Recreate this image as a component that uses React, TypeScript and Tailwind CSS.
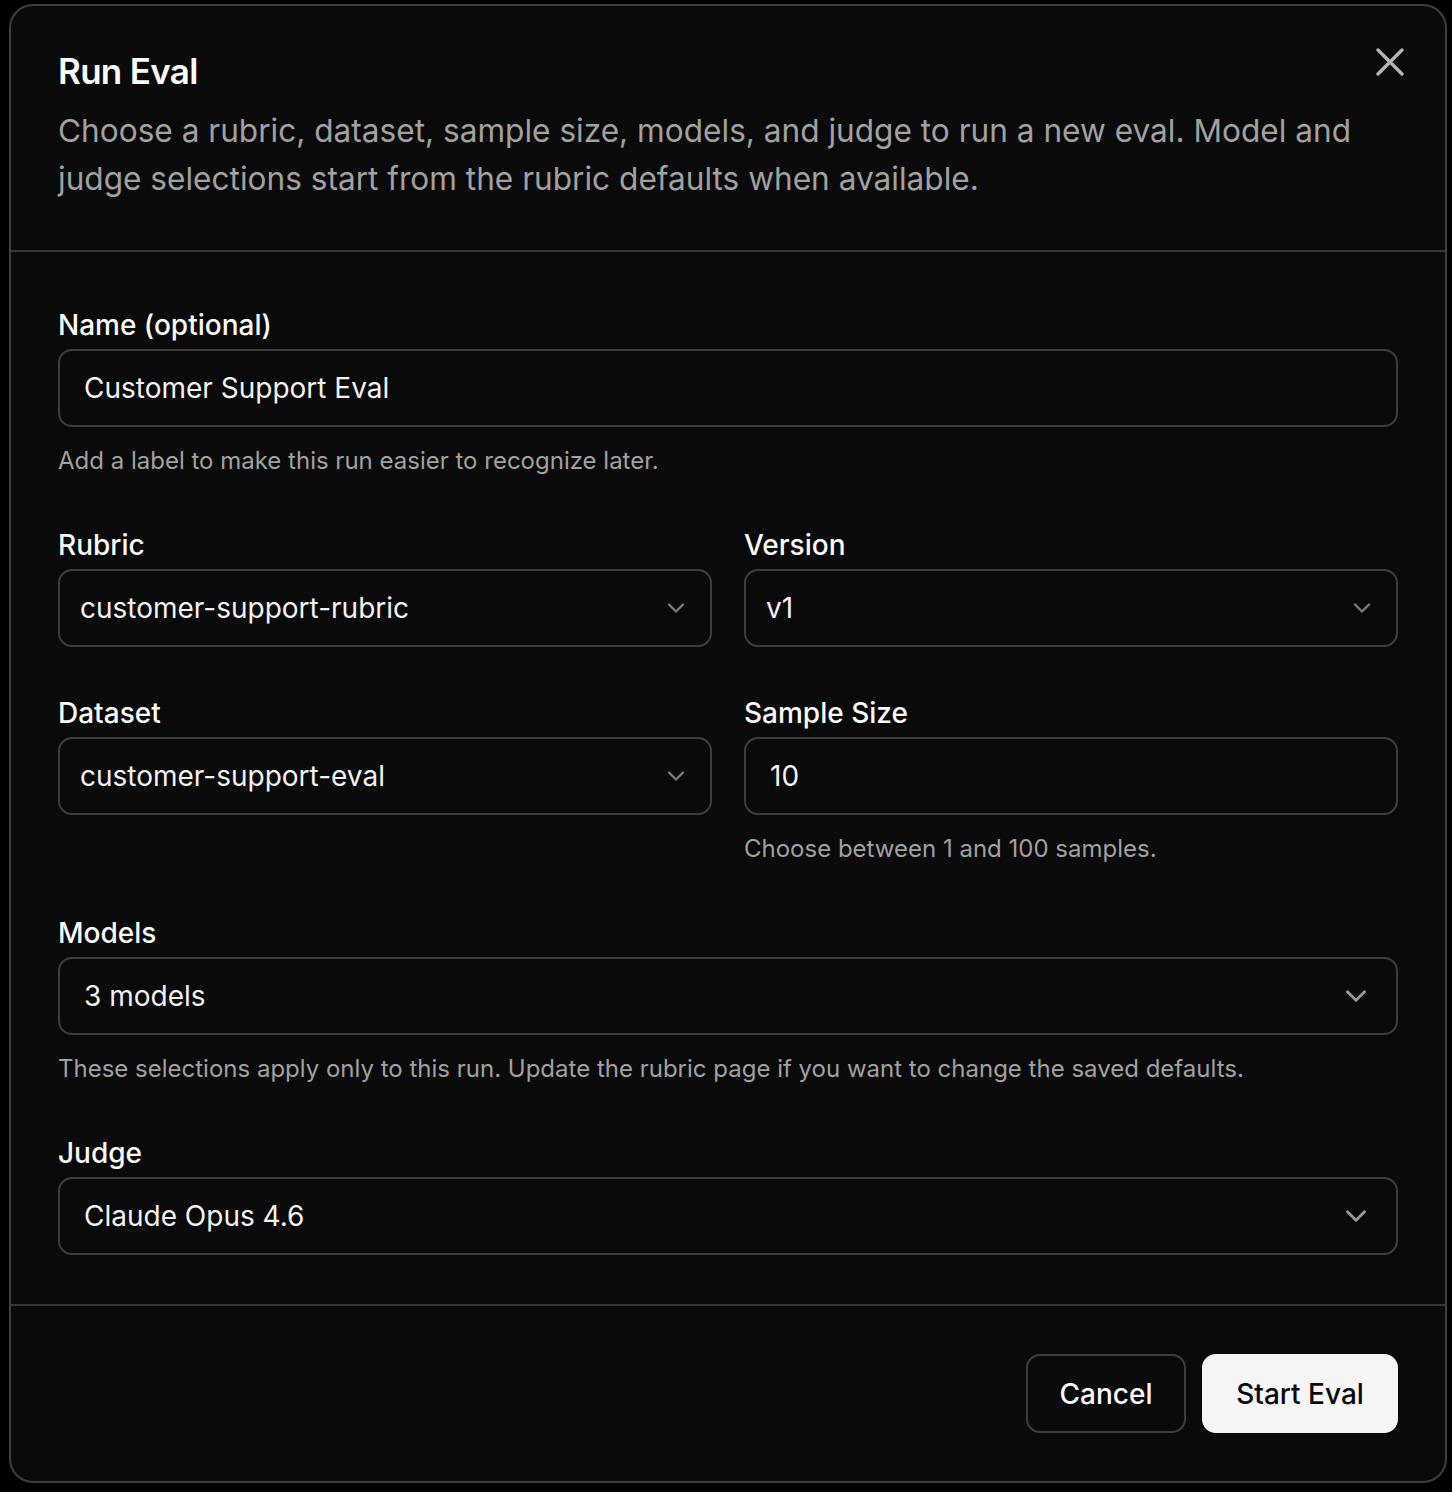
import React from 'react';
import { ChevronDown } from 'lucide-react';

const Label: React.FC<{ children: React.ReactNode }> = ({ children }) => (
  <label className="block text-[28px] leading-[28px] font-medium text-[#fafafa]">{children}</label>
);

const Hint: React.FC<{ children: React.ReactNode }> = ({ children }) => (
  <p className="mt-[16px] text-[24px] leading-[36px] text-[#a1a1a1]">{children}</p>
);

// compact select used in the two-column rows
const SmallSelect: React.FC<{ value: string }> = ({ value }) => (
  <button className="mt-[10px] flex h-[78px] w-full items-center justify-between rounded-[14px] border-2 border-[#3e3e3e] bg-[#0a0a0a] pl-[20px] pr-[20px] text-left text-[28px] text-[#f2f2f2]">
    <span>{value}</span>
    <ChevronDown size={28} strokeWidth={2} className="text-[#7c7c7c]" />
  </button>
);

// full-width select (models, judge)
const WideSelect: React.FC<{ value: string }> = ({ value }) => (
  <button className="mt-[10px] flex h-[78px] w-full items-center justify-between rounded-[14px] border-2 border-[#3e3e3e] bg-[#0a0a0a] pl-[24px] pr-[23px] text-left text-[28px] text-[#f2f2f2]">
    <span>{value}</span>
    <ChevronDown size={34} strokeWidth={2} className="text-[#9a9a9a]" />
  </button>
);

const TextInput: React.FC<{ value: string }> = ({ value }) => (
  <input
    readOnly
    value={value}
    className="mt-[10px] block h-[78px] w-full rounded-[14px] border-2 border-[#3e3e3e] bg-[#0a0a0a] px-[24px] text-[28px] text-[#f2f2f2] outline-none"
  />
);

export default function App() {
  return (
    <div className="min-h-screen bg-black pl-[9px] pt-[4px] font-['Inter',sans-serif]">
      <div className="relative w-[1438px] rounded-[24px] border-2 border-[#3f3f3f] bg-[#0a0a0a]">
        {/* close */}
        <button className="absolute right-[41px] top-[42px] text-[#b4b4b4]" aria-label="Close">
          <svg width="28" height="28" viewBox="0 0 28 28" fill="none" stroke="currentColor" strokeWidth="3.4" strokeLinecap="round">
            <path d="M2 2 26 26M26 2 2 26" />
          </svg>
        </button>

        {/* header */}
        <div className="border-b-2 border-[#363636] px-[47px] pt-[45px] pb-[47px]">
          <h2 className="text-[35px] leading-[40px] font-semibold tracking-[-0.02em] text-[#fafafa]">Run Eval</h2>
          <p className="mt-[16px] text-[31.6px] leading-[48px] text-[#a1a1a1]">
            Choose a rubric, dataset, sample size, models, and judge to run a new eval. Model and judge selections start
            from the rubric defaults when available.
          </p>
        </div>

        {/* body */}
        <div className="flex flex-col gap-[52px] px-[47px] pt-[59px] pb-[49px]">
          <div>
            <Label>Name (optional)</Label>
            <TextInput value="Customer Support Eval" />
            <Hint>Add a label to make this run easier to recognize later.</Hint>
          </div>

          <div className="grid grid-cols-2 gap-x-[32px]">
            <div>
              <Label>Rubric</Label>
              <SmallSelect value="customer-support-rubric" />
            </div>
            <div>
              <Label>Version</Label>
              <SmallSelect value="v1" />
            </div>
          </div>

          <div className="grid grid-cols-2 gap-x-[32px]">
            <div>
              <Label>Dataset</Label>
              <SmallSelect value="customer-support-eval" />
            </div>
            <div>
              <Label>Sample Size</Label>
              <TextInput value="10" />
              <Hint>Choose between 1 and 100 samples.</Hint>
            </div>
          </div>

          <div>
            <Label>Models</Label>
            <WideSelect value="3 models" />
            <Hint>These selections apply only to this run. Update the rubric page if you want to change the saved defaults.</Hint>
          </div>

          <div>
            <Label>Judge</Label>
            <WideSelect value="Claude Opus 4.6" />
          </div>
        </div>

        {/* footer */}
        <div className="flex justify-end gap-[16px] border-t-2 border-[#363636] px-[47px] pt-[48px] pb-[48px]">
          <button className="flex h-[79px] w-[160px] items-center justify-center rounded-[14px] border-2 border-[#3e3e3e] bg-[#0a0a0a] text-[28px] font-medium text-[#fafafa]">
            Cancel
          </button>
          <button className="flex h-[79px] w-[196px] items-center justify-center rounded-[14px] border-2 border-[#f5f5f5] bg-[#f5f5f5] text-[28px] font-medium text-[#0a0a0a]">
            Start Eval
          </button>
        </div>
      </div>
    </div>
  );
}
